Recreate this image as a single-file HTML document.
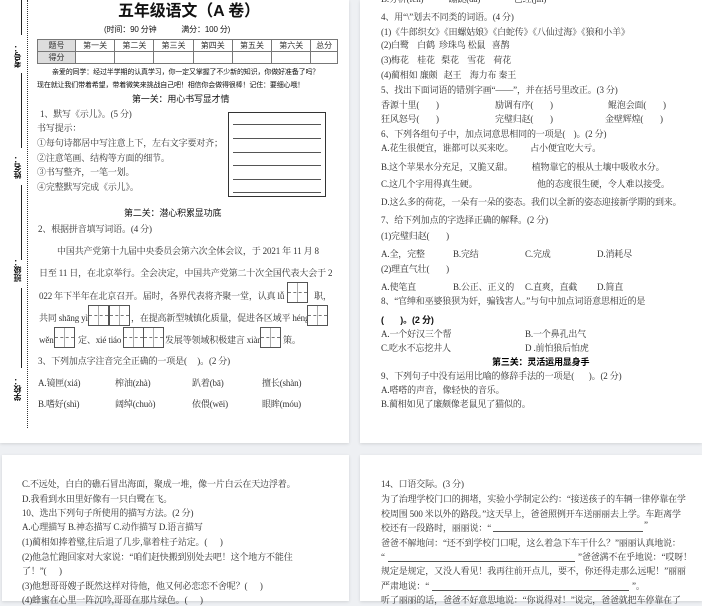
<!DOCTYPE html>
<html><head><meta charset="utf-8"><style>
body{margin:0;width:702px;height:601px;background:#eef0f3;position:relative;overflow:hidden;font-family:"Liberation Serif","Noto Serif CJK SC","Noto Sans CJK SC",serif;color:#333}
.pg{position:absolute;background:#fff;box-shadow:0 1px 3px rgba(0,0,0,.12)}
.t{position:absolute;white-space:nowrap;font-size:9px;line-height:11px;letter-spacing:-0.15px}
.s{font-family:"Liberation Sans","Noto Sans CJK SC",sans-serif;color:#111}
.h{position:absolute;height:1px;background:#555}
.box{position:absolute;border:1px solid #333;background:#fff}
.tz{position:absolute;width:19px;height:19px;border:1px solid #555;background:#fff}
.tz::before{content:"";position:absolute;left:0;right:0;top:9px;border-top:1px dashed #777}
.tz::after{content:"";position:absolute;top:0;bottom:0;left:9px;border-left:1px solid #aaa}
table{position:absolute;border-collapse:collapse;font-size:8px;font-family:"Liberation Sans","Noto Sans CJK SC",sans-serif}
td{border:1px solid #777;height:11px;padding:0;text-align:center;color:#333}
.vl{position:absolute;writing-mode:vertical-rl;transform:rotate(180deg);font-size:8px;font-family:"Liberation Sans","Noto Sans CJK SC",sans-serif;color:#111;font-weight:bold}
</style></head><body>
<div class="pg" style="left:0;top:0;width:349px;height:443px"></div>
<div class="pg" style="left:360px;top:0;width:342px;height:443px"></div>
<div class="pg" style="left:2px;top:455px;width:347px;height:146px"></div>
<div class="pg" style="left:360px;top:455px;width:342px;height:146px"></div>

<div style="position:absolute;left:21px;top:0;width:1px;height:35px;background:#222"></div>
<div style="position:absolute;left:21px;top:73px;width:1px;height:75px;background:#222"></div>
<div style="position:absolute;left:21px;top:185px;width:1px;height:75px;background:#222"></div>
<div style="position:absolute;left:21px;top:288px;width:1px;height:80px;background:#222"></div>
<div style="position:absolute;left:27px;top:0;width:0;height:428px;border-left:1px dotted #333"></div>
<div class="vl" style="left:12px;top:44px">考号：</div>
<div class="vl" style="left:12px;top:155px">姓名：</div>
<div class="vl" style="left:12px;top:258px">班级：</div>
<div class="vl" style="left:12px;top:377px">学校：</div>

<div class="t s" style="left:118px;top:2px;font-size:16px;line-height:20px;font-weight:bold">五年级语文（A 卷）</div>
<div class="t s" style="left:104px;top:24px;font-size:8px">(时间：90 分钟&nbsp;&nbsp;&nbsp;&nbsp;&nbsp;&nbsp;&nbsp;&nbsp;&nbsp;&nbsp;&nbsp;&nbsp;满分：100 分)</div>
<table style="left:37px;top:39px;width:301px">
<tr><td style="background:#ddd;width:37px">题号</td><td>第一关</td><td>第二关</td><td>第三关</td><td>第四关</td><td>第五关</td><td>第六关</td><td>总分</td></tr>
<tr><td style="background:#ddd">得分</td><td></td><td></td><td></td><td></td><td></td><td></td><td></td></tr></table>
<div class="t s" style="left:52px;top:67px;font-size:7px">亲爱的同学：经过半学期的认真学习，你一定又掌握了不少新的知识，你做好准备了吗？</div>
<div class="t s" style="left:37px;top:80px;font-size:7px">现在就让我们带着希望，带着微笑来挑战自己吧！相信你会做得很棒！记住：要细心哦！</div>
<div class="t s" style="left:132px;top:94px;font-size:9px">第一关：用心书写显才情</div>
<div class="t" style="left:40px;top:109px">1、默写《示儿》。(5 分)</div>
<div class="t" style="left:37px;top:123px">书写提示：</div>
<div class="t" style="left:37px;top:138px">①每句诗都居中写注意上下，左右文字要对齐；</div>
<div class="t" style="left:37px;top:153px">②注意笔画、结构等方面的细节。</div>
<div class="t" style="left:37px;top:167px">③书写整齐，一笔一划。</div>
<div class="t" style="left:37px;top:182px">④完整默写完成《示儿》。</div>
<div class="box" style="left:228px;top:112px;width:96px;height:83px"></div>
<div class="h" style="left:233px;top:124px;width:88px"></div><div class="h" style="left:233px;top:138px;width:88px"></div><div class="h" style="left:233px;top:152px;width:88px"></div><div class="h" style="left:233px;top:165px;width:88px"></div><div class="h" style="left:233px;top:179px;width:88px"></div><div class="h" style="left:233px;top:192px;width:88px"></div>
<div class="t s" style="left:124px;top:208px">第二关：潜心积累显功底</div>
<div class="t" style="left:38px;top:224px">2、根据拼音填写词语。(4 分)</div>
<div class="t" style="left:57px;top:246px">中国共产党第十九届中央委员会第六次全体会议，于 2021 年 11 月 8</div>
<div class="t" style="left:39px;top:268px">日至 11 日，在北京举行。全会决定，中国共产党第二十次全国代表大会于 2</div>
<div class="t" style="left:39px;top:291px">022 年下半年在北京召开。届时，各界代表将齐聚一堂，认真 lǚ</div>
<div class="t" style="left:314px;top:291px">职，</div>
<div class="tz" style="left:287px;top:282px"></div>
<div class="t" style="left:39px;top:313px">共同 shāng yì</div>
<div class="t" style="left:131px;top:313px">，在提高新型城镇化质量，促进各区域平 héng</div>
<div class="tz" style="left:88px;top:305px"></div><div class="tz" style="left:109px;top:305px"></div>
<div class="tz" style="left:307px;top:305px"></div>
<div class="t" style="left:39px;top:335px">wěn</div>
<div class="t" style="left:78px;top:335px">定、xié tiáo</div>
<div class="t" style="left:165px;top:335px">发展等领域积极建言 xiàn</div>
<div class="t" style="left:283px;top:335px">策。</div>
<div class="tz" style="left:54px;top:327px"></div>
<div class="tz" style="left:123px;top:327px"></div><div class="tz" style="left:143px;top:327px"></div>
<div class="tz" style="left:260px;top:327px"></div>
<div class="t" style="left:38px;top:356px">3、下列加点字注音完全正确的一项是(&nbsp;&nbsp;&nbsp;&nbsp;&nbsp;)。(2 分)</div>
<div class="t" style="left:38px;top:378px">A.镜匣(xiá)</div><div class="t" style="left:115px;top:378px">榨油(zhà)</div><div class="t" style="left:192px;top:378px">趴着(bā)</div><div class="t" style="left:262px;top:378px">擅长(shàn)</div>
<div class="t" style="left:38px;top:399px">B.嗜好(shì)</div><div class="t" style="left:115px;top:399px">阔绰(chuò)</div><div class="t" style="left:192px;top:399px">依偎(wēi)</div><div class="t" style="left:262px;top:399px">眼眸(móu)</div>

<div class="t" style="left:381px;top:-6px">B.分析(fēn)&nbsp;&nbsp;&nbsp;&nbsp;&nbsp;&nbsp;&nbsp;&nbsp;&nbsp;&nbsp;&nbsp;&nbsp;蹦跶(da)&nbsp;&nbsp;&nbsp;&nbsp;&nbsp;&nbsp;&nbsp;&nbsp;&nbsp;&nbsp;&nbsp;&nbsp;&nbsp;&nbsp;&nbsp;&nbsp;已经(jīn)</div>
<div class="t" style="left:381px;top:12px">4、用“\”划去不同类的词语。(4 分)</div>
<div class="t" style="left:381px;top:27px">(1)《牛郎织女》《田螺姑娘》《白蛇传》《八仙过海》《狼和小羊》</div>
<div class="t" style="left:381px;top:40px">(2)白鹭&nbsp;&nbsp;&nbsp;&nbsp;白鹤&nbsp;&nbsp;珍珠鸟 松鼠&nbsp;&nbsp;&nbsp;喜鹊</div>
<div class="t" style="left:381px;top:55px">(3)梅花&nbsp;&nbsp;&nbsp;&nbsp;桂花&nbsp;&nbsp;&nbsp;梨花&nbsp;&nbsp;&nbsp;&nbsp;雪花&nbsp;&nbsp;&nbsp;&nbsp;荷花</div>
<div class="t" style="left:381px;top:70px">(4)蔺相如 廉颇&nbsp;&nbsp;&nbsp;赵王&nbsp;&nbsp;&nbsp;&nbsp;海力布 秦王</div>
<div class="t" style="left:381px;top:85px">5、找出下面词语的错别字画“——”，并在括号里改正。(3 分)</div>
<div class="t" style="left:381px;top:100px">香源十里(&nbsp;&nbsp;&nbsp;&nbsp;&nbsp;&nbsp;&nbsp;&nbsp;)</div><div class="t" style="left:495px;top:100px">励调有序(&nbsp;&nbsp;&nbsp;&nbsp;&nbsp;&nbsp;&nbsp;&nbsp;)</div><div class="t" style="left:608px;top:100px">鲲泡会面(&nbsp;&nbsp;&nbsp;&nbsp;&nbsp;&nbsp;&nbsp;&nbsp;)</div>
<div class="t" style="left:381px;top:114px">狂风怒号(&nbsp;&nbsp;&nbsp;&nbsp;&nbsp;&nbsp;&nbsp;&nbsp;)</div><div class="t" style="left:495px;top:114px">完璧归赵(&nbsp;&nbsp;&nbsp;&nbsp;&nbsp;&nbsp;&nbsp;&nbsp;)</div><div class="t" style="left:605px;top:114px">金壁辉煌(&nbsp;&nbsp;&nbsp;&nbsp;&nbsp;&nbsp;&nbsp;&nbsp;)</div>
<div class="t" style="left:381px;top:129px">6、下列各组句子中，加点词意思相同的一项是(&nbsp;&nbsp;&nbsp;&nbsp;)。(2 分)</div>
<div class="t" style="left:381px;top:143px">A.花生很便宜，谁都可以买来吃。&nbsp;&nbsp;&nbsp;&nbsp;&nbsp;&nbsp;&nbsp;&nbsp;占小便宜吃大亏。</div>
<div class="t" style="left:381px;top:162px">B.这个苹果水分充足，又脆又甜。&nbsp;&nbsp;&nbsp;&nbsp;&nbsp;&nbsp;&nbsp;&nbsp;&nbsp;植物靠它的根从土壤中吸收水分。</div>
<div class="t" style="left:381px;top:179px">C.这几个字用得真生硬。</div><div class="t" style="left:537px;top:179px">他的态度很生硬，令人难以接受。</div>
<div class="t" style="left:381px;top:197px">D.这么多的荷花，一朵有一朵的姿态。我们以全新的姿态迎接新学期的到来。</div>
<div class="t" style="left:381px;top:215px">7、给下列加点的字选择正确的解释。(2 分)</div>
<div class="t" style="left:381px;top:231px">(1)完璧归赵(&nbsp;&nbsp;&nbsp;&nbsp;&nbsp;&nbsp;&nbsp;&nbsp;)</div>
<div class="t" style="left:381px;top:249px">A.全，完整</div><div class="t" style="left:453px;top:249px">B.完结</div><div class="t" style="left:525px;top:249px">C.完成</div><div class="t" style="left:597px;top:249px">D.消耗尽</div>
<div class="t" style="left:381px;top:264px">(2)理直气壮(&nbsp;&nbsp;&nbsp;&nbsp;&nbsp;&nbsp;&nbsp;&nbsp;)</div>
<div class="t" style="left:381px;top:282px">A.使笔直</div><div class="t" style="left:453px;top:282px">B.公正、正义的</div><div class="t" style="left:525px;top:282px">C.直爽，直截</div><div class="t" style="left:597px;top:282px">D.简直</div>
<div class="t" style="left:381px;top:296px">8、“官绅和巫婆狼狈为奸，骗钱害人。”与句中加点词语意思相近的是</div>
<div class="t s" style="left:381px;top:315px;font-weight:bold">(&nbsp;&nbsp;&nbsp;&nbsp;&nbsp;&nbsp;&nbsp;)。(2 分)</div>
<div class="t" style="left:381px;top:329px">A.一个好汉三个帮</div><div class="t" style="left:525px;top:329px">B.一个鼻孔出气</div>
<div class="t" style="left:381px;top:343px">C.吃水不忘挖井人</div><div class="t" style="left:525px;top:343px">D .前怕狼后怕虎</div>
<div class="t s" style="left:492px;top:357px;font-weight:bold;color:#000">第三关：灵活运用显身手</div>
<div class="t" style="left:381px;top:371px">9、下列句子中没有运用比喻的修辞手法的一项是(&nbsp;&nbsp;&nbsp;&nbsp;&nbsp;&nbsp;&nbsp;)。(2 分)</div>
<div class="t" style="left:381px;top:385px">A.嗒嗒的声音，像轻快的音乐。</div>
<div class="t" style="left:381px;top:399px">B.蔺相如见了廉颇像老鼠见了猫似的。</div>

<div class="t" style="left:22px;top:479px">C.不远处，白白的礁石冒出海面，聚成一堆，像一片白云在天边浮着。</div>
<div class="t" style="left:22px;top:494px">D.我看到水田里好像有一只白鹭在飞。</div>
<div class="t" style="left:22px;top:508px">10、选出下列句子所使用的描写方法。(2 分)</div>
<div class="t" style="left:22px;top:522px">A.心理描写 B.神态描写 C.动作描写 D.语言描写</div>
<div class="t" style="left:22px;top:537px">(1)蔺相如捧着璧,往后退了几步,靠着柱子站定。(&nbsp;&nbsp;&nbsp;&nbsp;&nbsp;&nbsp;)</div>
<div class="t" style="left:22px;top:552px">(2)他急忙跑回家对大家说：“咱们赶快搬到别处去吧！这个地方不能住</div>
<div class="t" style="left:22px;top:566px">了！”(&nbsp;&nbsp;&nbsp;&nbsp;&nbsp;&nbsp;)</div>
<div class="t" style="left:22px;top:581px">(3)他想哥哥嫂子既然这样对待他，他又何必恋恋不舍呢？(&nbsp;&nbsp;&nbsp;&nbsp;&nbsp;&nbsp;)</div>
<div class="t" style="left:22px;top:595px">(4)蜂蜜在心里一阵沉吟,哥哥在那片绿色。(&nbsp;&nbsp;&nbsp;&nbsp;&nbsp;&nbsp;)</div>

<div class="t" style="left:381px;top:479px">14、口语交际。(3 分)</div>
<div class="t" style="left:381px;top:494px">为了治理学校门口的拥堵，实验小学制定公约：“接送孩子的车辆一律停靠在学</div>
<div class="t" style="left:381px;top:509px">校周围 500 米以外的路段。”这天早上，爸爸照例开车送丽丽去上学。车距离学</div>
<div class="t" style="left:381px;top:523px">校还有一段路时，丽丽说：“</div><div class="h" style="left:493px;top:531px;width:150px"></div><div class="t" style="left:644px;top:520px">”</div>
<div class="t" style="left:381px;top:538px">爸爸不解地问：“还不到学校门口呢，这么着急下车干什么？”丽丽认真地说：</div>
<div class="t" style="left:381px;top:552px">“</div><div class="h" style="left:388px;top:561px;width:187px"></div><div class="t" style="left:578px;top:552px">”爸爸满不在乎地说：“哎呀！</div>
<div class="t" style="left:381px;top:566px">规定是规定，又没人看见！我再往前开点儿，要不，你还得走那么远呢！”丽丽</div>
<div class="t" style="left:381px;top:581px">严肃地说：“</div><div class="h" style="left:432px;top:590px;width:197px"></div><div class="t" style="left:632px;top:581px">”。</div>
<div class="t" style="left:381px;top:595px">听了丽丽的话，爸爸不好意思地说：“你说得对！”说完，爸爸就把车停靠在了</div>
</body></html>
